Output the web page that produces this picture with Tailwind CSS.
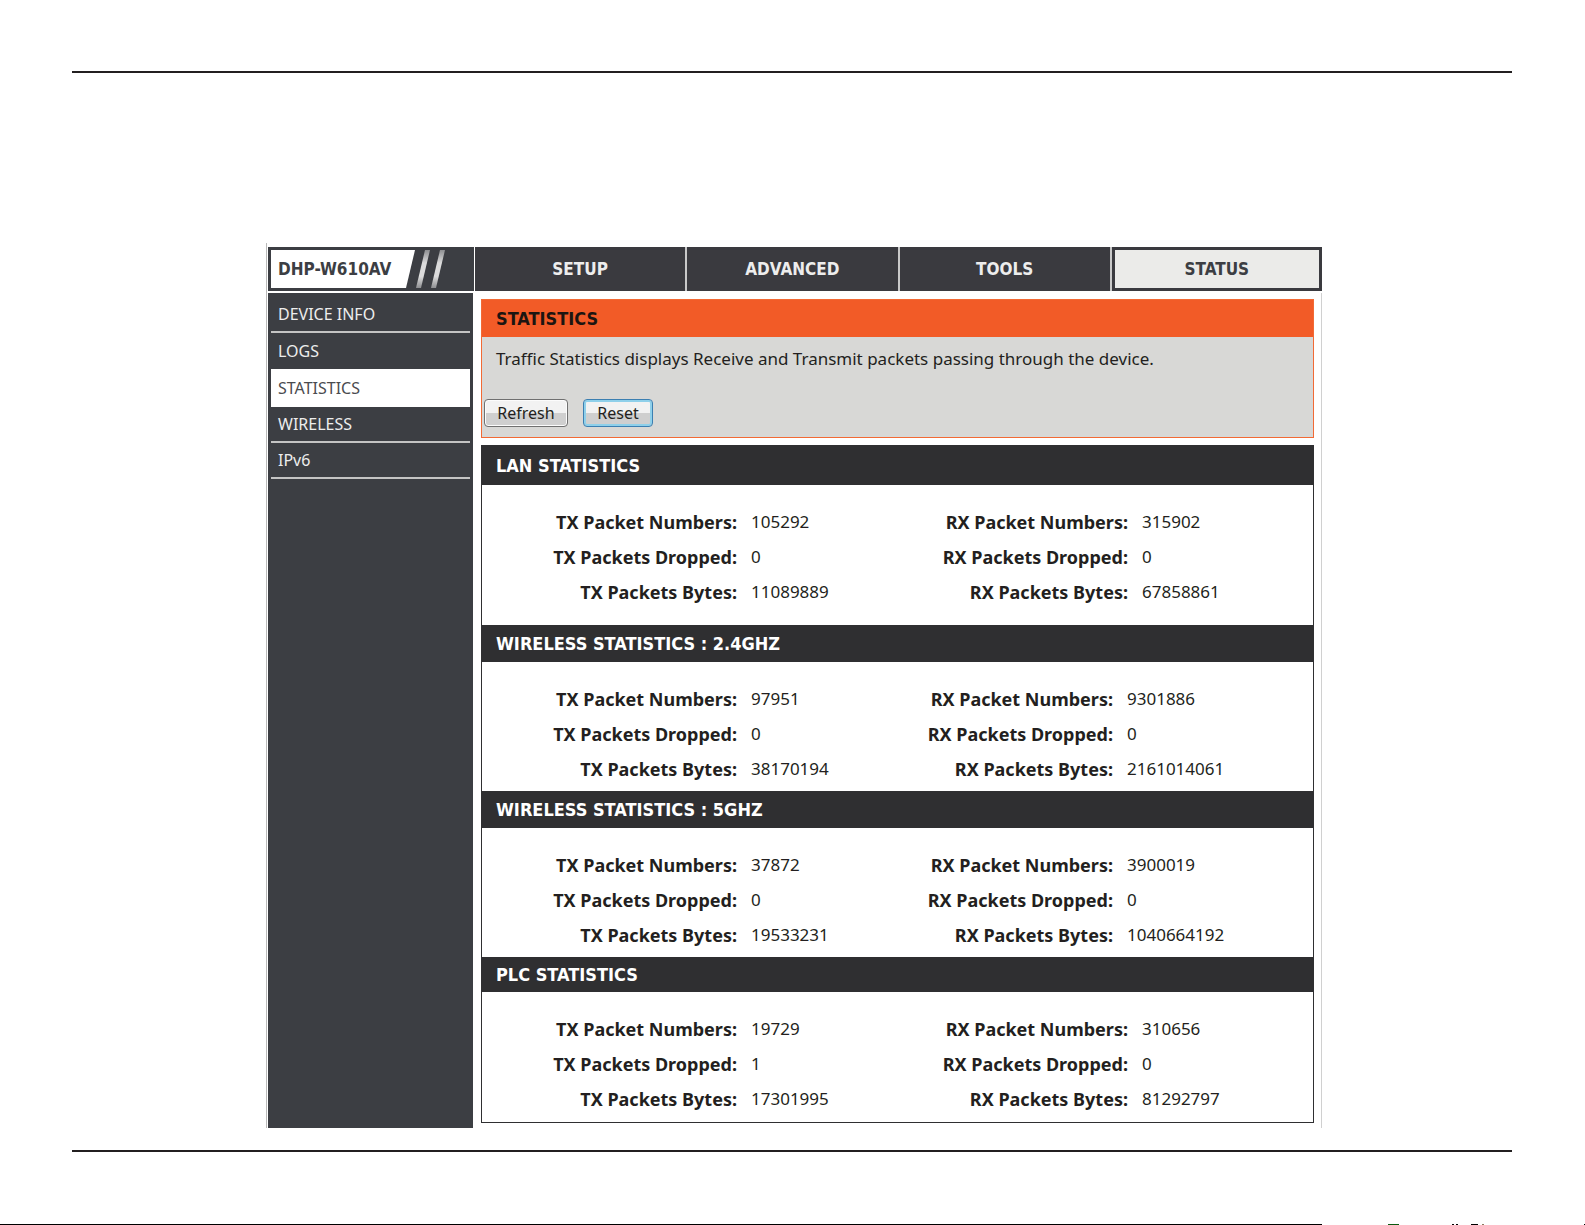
<!DOCTYPE html>
<html lang="en">
<head>
    <meta charset="UTF-8">
    <meta name="viewport" content="width=device-width, initial-scale=1.0">
    <title>DHP-W610AV - Statistics</title>
    <script src="https://cdn.jsdelivr.net/npm/@tailwindcss/browser@4"></script>
</head>
<body class="flex flex-col min-h-screen bg-white font-['Noto_Sans',sans-serif] text-[17px] leading-6 text-[#231f20]">
    <div class="pl-[72px] pr-[73px] pt-[71px]">
        <div class="border-t-2 border-[#231f20]"></div>

        <div class="pl-1 pt-[170px] pb-[22px]">
            <div class="max-w-[1056px] mx-auto border-l border-[#b9b9b9] pl-px pt-1">
                <!-- Top tabs -->
                <header class="flex h-[44px] mb-0.5 text-[17px] font-bold font-['DejaVu_Sans_Condensed','Noto_Sans',sans-serif]">
                    <div class="relative w-[206px] shrink-0 bg-[#3c3e43] flex items-center">
                        <svg class="absolute left-[3px] top-[3px]" width="174" height="38" viewBox="0 0 174 38">
                            <defs>
                                <linearGradient id="stripe" x1="0" y1="0" x2="0" y2="1">
                                    <stop offset="0" stop-color="#8e8f92"/>
                                    <stop offset="0.35" stop-color="#dcdcdc"/>
                                    <stop offset="0.7" stop-color="#dcdcdc"/>
                                    <stop offset="1" stop-color="#8e8f92"/>
                                </linearGradient>
                            </defs>
                            <path d="M0 0H144L135 38H0Z" fill="#fff"/>
                            <path d="M154 0H159L150 38H145Z" fill="url(#stripe)"/>
                            <path d="M169 0H174L165 38H160Z" fill="url(#stripe)"/>
                        </svg>
                        <span class="relative pl-2.5 text-[#3c3e43]">DHP-W610AV</span>
                    </div>
                    <nav class="grid grid-cols-4 flex-1 gap-0.5 ml-px bg-[#c9c9c9] text-center">
                        <a href="#" class="flex items-center justify-center bg-[#3a3a3f] text-[#ededed]">SETUP</a>
                        <a href="#" class="flex items-center justify-center bg-[#3a3a3f] text-[#ededed]">ADVANCED</a>
                        <a href="#" class="flex items-center justify-center bg-[#3a3a3f] text-[#ededed]">TOOLS</a>
                        <a href="#" class="flex items-center justify-center bg-[#ebebe9] text-[#3c3e43] border-3 border-[#3a3a3f]">STATUS</a>
                    </nav>
                </header>

                <div class="flex border-r border-[#d0d0d0]">
                    <!-- Side menu -->
                    <nav class="w-[205px] shrink-0 bg-[#3c3e43] px-[3px] pt-1 text-base text-[#ededed]">
                        <a href="#" class="flex items-center h-9 pl-[7px] border-b-2 border-[#c4c4c4]">DEVICE INFO</a>
                        <a href="#" class="flex items-center h-9 pl-[7px]">LOGS</a>
                        <a href="#" class="flex items-center h-[38px] pl-[7px] bg-white text-[#4a4b4f]">STATISTICS</a>
                        <a href="#" class="flex items-center h-9 pl-[7px] border-b-2 border-[#c4c4c4]">WIRELESS</a>
                        <a href="#" class="flex items-center h-9 pl-[7px] border-b-2 border-[#c4c4c4]">IPv6</a>
                    </nav>

                    <main class="flex-1 pl-2 pr-[7px] pt-1.5 pb-[5px]">
                        <section class="border border-[#f26a35] bg-[#d8d8d6] mb-[7px]">
                            <h1 class="flex items-center h-[37px] pl-3.5 bg-[#f25b27] text-[#1c1511] text-lg font-bold font-['DejaVu_Sans_Condensed','Noto_Sans',sans-serif]">STATISTICS</h1>
                            <p class="pl-3.5 pt-2.5">Traffic Statistics displays Receive and Transmit packets passing through the device.</p>
                            <div class="flex gap-[15px] pl-0.5 pt-7 pb-2.5 text-base">
                                <button class="w-[84px] h-7 border border-[#707070] rounded-sm bg-linear-to-b from-[#f2f2f2] from-50% to-[#cfcfcf] to-50% shadow-[inset_0_0_0_1px_#fcfcfc]">Refresh</button>
                                <button class="w-[70px] h-7 border border-[#3c7fb1] rounded-sm bg-linear-to-b from-[#f2f2f2] from-50% to-[#cfcfcf] to-50% shadow-[inset_0_0_0_2px_#8fd0ea]">Reset</button>
                            </div>
                        </section>

                        <div id="stats" class="border border-[#2f2f31]"></div>
                    </main>
                </div>
            </div>
        </div>

        <div class="border-t-2 border-[#231f20]"></div>
    </div>

    <!-- Bottom edge -->
    <footer class="flex mt-auto h-px">
        <span class="w-[1322px] bg-black"></span>
        <span class="w-[11px] ml-[66px] bg-[#0a5a10]"></span>
        <span class="w-0.5 ml-[53px] bg-black"></span>
        <span class="w-0.5 ml-0.5 bg-black"></span>
        <span class="w-[7px] ml-[13px] bg-black"></span>
        <span class="w-0.5 ml-1 bg-[#8a7a60]"></span>
        <span class="w-px ml-auto bg-black"></span>
    </footer>

    <script>
        const sections = [
            { title: "LAN STATISTICS", tx: ["105292", "0", "11089889"], rx: ["315902", "0", "67858861"], head: "h-[39px]", body: "pb-4", col: "w-[241px]" },
            { title: "WIRELESS STATISTICS : 2.4GHZ", tx: ["97951", "0", "38170194"], rx: ["9301886", "0", "2161014061"], head: "h-[37px]", body: "pb-[5px]", col: "w-[226px]" },
            { title: "WIRELESS STATISTICS : 5GHZ", tx: ["37872", "0", "19533231"], rx: ["3900019", "0", "1040664192"], head: "h-[37px]", body: "pb-[5px]", col: "w-[226px]" },
            { title: "PLC STATISTICS", tx: ["19729", "1", "17301995"], rx: ["310656", "0", "81292797"], head: "h-[35px]", body: "pb-1.5", col: "w-[241px]" }
        ];
        const labels = ["Packet Numbers:", "Packets Dropped:", "Packets Bytes:"];

        document.getElementById("stats").innerHTML = sections.map(s => `
            <section>
                <h2 class="flex items-center ${s.head} pl-3.5 bg-[#2f2f31] text-white text-lg font-bold font-['DejaVu_Sans_Condensed','Noto_Sans',sans-serif]">${s.title}</h2>
                <div class="pt-[19px] ${s.body}">
                    <table class="w-full table-fixed">
                        <colgroup><col class="w-[255px]"><col class="w-[150px]"><col class="${s.col}"><col></colgroup>
                        <tbody>
                            ${labels.map((label, i) => `
                            <tr class="h-[35px]">
                                <th scope="row" class="text-right font-bold text-lg">TX ${label}</th>
                                <td class="pl-3.5">${s.tx[i]}</td>
                                <th scope="row" class="text-right font-bold text-lg">RX ${label}</th>
                                <td class="pl-3.5">${s.rx[i]}</td>
                            </tr>`).join("")}
                        </tbody>
                    </table>
                </div>
            </section>`).join("");
    </script>
</body>
</html>
